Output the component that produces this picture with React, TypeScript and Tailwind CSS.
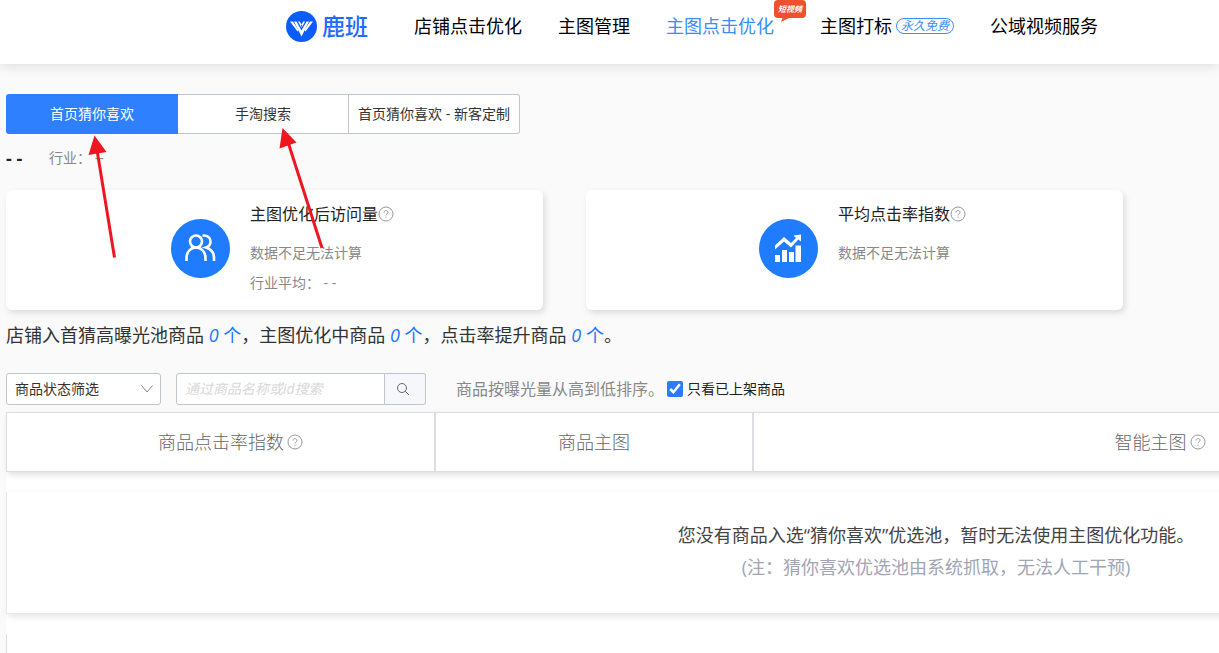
import type { ReactNode } from 'react'

const tabs = ['首页猜你喜欢', '手淘搜索', '首页猜你喜欢 - 新客定制']

function HelpIcon() {
    return (
        <svg viewBox="0 0 16 16" className="w-4 h-4 shrink-0 text-[#999999]" fill="none" stroke="currentColor">
            <circle cx="8" cy="8" r="7" />
            <path d="M6 6.6C6 5.3 6.8 4.6 8 4.6s2 .7 2 1.8c0 1.4-2 1.5-2 3M8 10.6v1.1" />
        </svg>
    )
}

function Logo() {
    return (
        <a href="#" className="flex items-center gap-[5px] text-[#1f6bff]">
            <svg viewBox="0 0 31 31" className="w-[31px] h-[31px]">
                <circle cx="15.5" cy="15.5" r="15.5" fill="#0a5cff" />
                <path d="M4 10.500H7L12.500 19 11.500 20.500ZM27 10.500H24L18.500 19 19.500 20.500Z" fill="#ffffff" />
                <path d="M8 10.500H10.500L15.500 19.500 20.500 10.500H23L15.500 25.500Z" fill="#ffffff" />
                <path d="M12 10.500H13.800L16 14.500 15.500 17ZM19 10.500H17.200L15 14.500 15.500 17Z" fill="#ffffff" />
            </svg>
            <span className="text-[23px] leading-8 font-medium">鹿班</span>
        </a>
    )
}

function Header() {
    return (
        <header className="relative h-16 pb-3 pl-[286px] bg-white shadow-[0_2px_12px_rgba(0,0,0,0.12)] flex items-center">
            <Logo />
            <nav className="ml-[46px] flex items-center gap-9 text-lg text-black whitespace-nowrap">
                <a href="#">店铺点击优化</a>
                <a href="#">主图管理</a>
                <a href="#" className="relative mr-[10px] text-[#3a8ef6]">
                    主图点击优化
                    <span className="absolute left-full -top-3 w-8 h-[18px] rounded bg-[#f1502f] text-white text-[8px] leading-[18px] font-bold italic text-center">
                        短视频
                        <svg viewBox="0 0 10 5" className="absolute left-[7px] top-[17px] w-[10px] h-[5px]">
                            <path d="M2 0H10L0 5Z" fill="#f1502f" />
                        </svg>
                    </span>
                </a>
                <a href="#" className="flex items-center gap-1">
                    主图打标
                    <span className="h-4 px-1 rounded-full border border-[#3a8ef6] text-[#3a8ef6] text-xs leading-[14px] italic">
                        永久免费
                    </span>
                </a>
                <a href="#">公域视频服务</a>
            </nav>
        </header>
    )
}

function StatCard({ icon, title, children }: { icon: ReactNode; title: string; children: ReactNode }) {
    return (
        <section className="h-[120px] pl-4 pb-1 rounded-md bg-white shadow-[2px_3px_6px_rgba(0,0,0,0.12)] flex items-center justify-center gap-5">
            <div className="w-[59px] h-[59px] shrink-0 rounded-full bg-[#1f7cff] flex items-center justify-center">
                {icon}
            </div>
            <div className="min-h-[92px] text-sm leading-[22px] text-[#888888]">
                <h3 className="mb-4 flex items-center text-base leading-6 text-[#222222]">
                    {title}
                    <HelpIcon />
                </h3>
                {children}
            </div>
        </section>
    )
}

function UsersIcon() {
    return (
        <svg viewBox="0 0 32 32" className="w-8 h-8" fill="none" stroke="#ffffff" strokeWidth="2.600">
            <circle cx="12" cy="9.500" r="6" />
            <path d="M2.500 29v-3c0-6 4-10.500 9.500-10.500s9.500 4.500 9.500 10.500v3" />
            <path d="M18.500 3.700c4.500-.8 8 1.800 8 5.800 0 3-1.500 5-4.500 6 5 1.500 8 5.500 8 10.500v3" />
        </svg>
    )
}

function ChartIcon() {
    return (
        <svg viewBox="0 0 28 30" className="w-7 h-[30px]" fill="#ffffff">
            <path d="M1 12.500L10 4l7 6 5-5-2.500-2.500L27 1.500v7L24.300 6.500 17 14.500l-7-6-9 8Z" />
            <path d="M1 22h5v7H1zM8 17h5v12H8zM15 19h5v10h-5zM21.500 12.500H27V29h-5.500z" />
        </svg>
    )
}

function Arrows() {
    return (
        <svg viewBox="0 0 330 270" className="absolute left-0 top-0 w-[330px] h-[270px] pointer-events-none" fill="#ee1620">
            <path d="M114.500 257.500L97 150M322 248L288 142" stroke="#ee1620" strokeWidth="3" />
            <path d="M94.500 135.500L106.500 152 88.500 155Z M282.500 128L296.500 142.500 279.500 148.500Z" />
        </svg>
    )
}

function Filters() {
    return (
        <div className="mt-6 flex items-center text-sm whitespace-nowrap">
            <div className="relative">
                <select
                    aria-label="商品状态筛选"
                    className="block w-[155px] h-8 pl-2 pr-8 appearance-none rounded-[3px] border border-[#c0c4cc] bg-white text-[#333333]"
                >
                    <option>商品状态筛选</option>
                </select>
                <svg viewBox="0 0 12 8" className="absolute right-2 top-3 w-3 h-2 pointer-events-none" fill="none" stroke="#888888">
                    <path d="M0.500 0.500L6 7 11.500 0.500" />
                </svg>
            </div>
            <form className="ml-[15px] flex h-8">
                <input
                    type="text"
                    aria-label="搜索商品"
                    placeholder="通过商品名称或id搜索"
                    className="w-[209px] px-2 rounded-l-[3px] border border-[#c0c4cc] bg-white placeholder:text-[#d8d8d8] placeholder:italic"
                />
                <button
                    type="button"
                    aria-label="搜索"
                    className="w-[41px] rounded-r-[3px] border border-l-0 border-[#c0c4cc] bg-[#f5f7fa] flex items-center justify-center"
                >
                    <svg viewBox="0 0 14 14" className="w-[14px] h-[14px] mr-1" fill="none" stroke="#666666">
                        <circle cx="6" cy="6" r="4.500" />
                        <path d="M9.300 9.300L13 13" />
                    </svg>
                </button>
            </form>
            <span className="ml-[30px] text-base text-[#888888]">商品按曝光量从高到低排序。</span>
            <label className="ml-[3px] flex items-center gap-1 text-[#222222]">
                <input type="checkbox" defaultChecked className="w-4 h-4 accent-[#2b7bff]" />
                只看已上架商品
            </label>
        </div>
    )
}

function ProductTable() {
    return (
        <div className="mt-[7px] w-[1860px] bg-white text-lg">
            <table className="w-full table-fixed border-separate border-spacing-0 border border-[#dcdee6] text-[#666666] shadow-[2px_3px_6px_rgba(0,0,0,0.12)]">
                <thead>
                    <tr className="h-[58px]">
                        <th className="w-[429px] pl-5 border-r-2 border-[#dcdde4] font-light">
                            <span className="flex items-center justify-center gap-[3px]">
                                商品点击率指数
                                <HelpIcon />
                            </span>
                        </th>
                        <th className="w-[318px] border-r-2 border-[#dcdde4] font-light">商品主图</th>
                        <th className="w-[814px] border-r-2 border-[#dcdde4] font-light">
                            <span className="flex items-center justify-center gap-[3px]">
                                智能主图
                                <HelpIcon />
                            </span>
                        </th>
                        <td />
                    </tr>
                </thead>
            </table>
            <section className="mt-5 h-[122px] pb-1 border border-t-0 border-[#ebebeb] shadow-[2px_3px_6px_rgba(0,0,0,0.1)] flex flex-col items-center justify-center gap-1">
                <p className="text-[#444444]">您没有商品入选“猜你喜欢”优选池，暂时无法使用主图优化功能。</p>
                <p className="text-[#a2a5b3]">(注：猜你喜欢优选池由系统抓取，无法人工干预)</p>
            </section>
            <div className="mt-5 h-12 border-l border-[#dcdee6]" />
        </div>
    )
}

export default function App() {
    return (
        <div className="relative h-screen overflow-hidden bg-[#fafafa] font-['Open_Sans','Noto_Sans_CJK_SC',sans-serif]">
            <Header />
            <main className="pt-[30px] pl-[6px]">
                <div className="flex text-sm">
                    {tabs.map((tab, i) => (
                        <button
                            key={tab}
                            type="button"
                            className={
                                i === 0
                                    ? 'w-[172px] h-10 rounded-l-[3px] bg-[#2f80ff] text-white'
                                    : 'w-[171px] h-10 border border-l-0 border-[#c0c4cc] bg-white text-[#333333] last:rounded-r-[3px]'
                            }
                        >
                            {tab}
                        </button>
                    ))}
                </div>
                <div className="mt-3 flex items-center h-6 text-sm">
                    <strong className="w-[43px] text-lg text-[#222222]">- -</strong>
                    <span className="text-[#888888]">行业： --</span>
                </div>
                <div className="mt-5 pr-24 grid grid-cols-2 gap-[43px]">
                    <StatCard icon={<UsersIcon />} title="主图优化后访问量">
                        <p>数据不足无法计算</p>
                        <p className="mt-2">行业平均： - -</p>
                    </StatCard>
                    <StatCard icon={<ChartIcon />} title="平均点击率指数">
                        <p>数据不足无法计算</p>
                    </StatCard>
                </div>
                <p className="mt-3 text-lg leading-[27px] text-[#333333]">
                    店铺入首猜高曝光池商品 <span className="text-[#1677ff]"><em>0</em> 个</span>，主图优化中商品{' '}
                    <span className="text-[#1677ff]"><em>0</em> 个</span>，点击率提升商品{' '}
                    <span className="text-[#1677ff]"><em>0</em> 个</span>。
                </p>
                <Filters />
                <ProductTable />
            </main>
            <Arrows />
        </div>
    )
}
